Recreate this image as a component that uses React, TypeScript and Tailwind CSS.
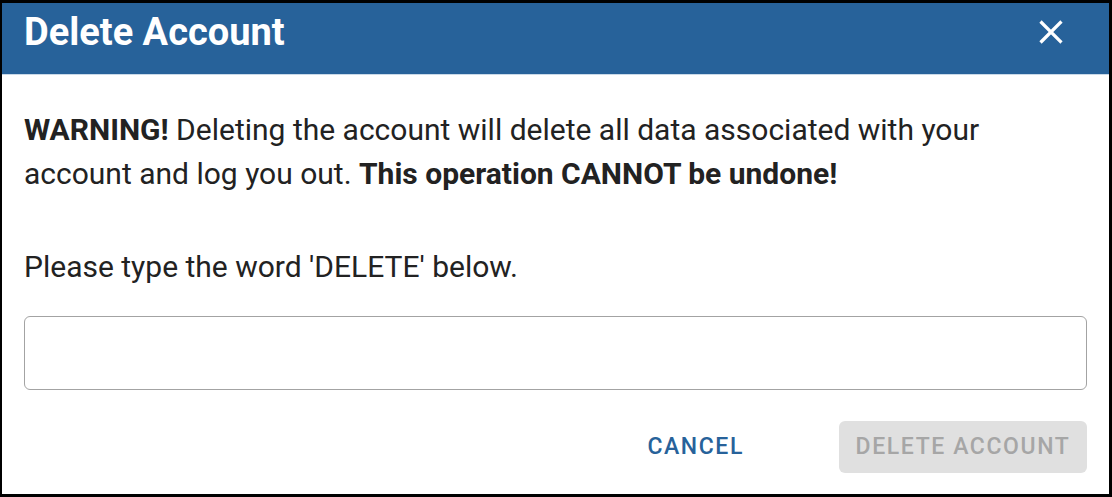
import React from "react";

export default function App() {
  return (
    <div
      className="w-[1112px] h-[497px] bg-white border-black border-l-2 border-t-[3px] border-r-[3px] border-b-[3px] flex flex-col"
      style={{ fontFamily: "Roboto, 'Liberation Sans', sans-serif" }}
    >
      <div className="h-[72px] bg-[#27629a] border-b border-[#c9d9e8] flex items-center justify-between pl-[22px] pr-[44px] pb-[13px]">
        <h2 className="text-[38px] font-bold text-white leading-none">Delete Account</h2>
        <svg width="28" height="28" viewBox="0 0 24 24" fill="none" stroke="white" strokeWidth="2.8" strokeLinecap="square">
          <path d="M4 4L20 20M20 4L4 20" />
        </svg>
      </div>
      <div className="flex-1 flex flex-col px-[22px]">
        <p className="mt-[33px] pr-[60px] text-[30px] leading-[44px] text-[#222222]">
          <b>WARNING!</b> Deleting the account will delete all data associated with your account and log you out.{" "}
          <b>This operation CANNOT be undone!</b>
        </p>
        <p className="mt-[49px] text-[30px] leading-[44px] text-[#222222]">Please type the word 'DELETE' below.</p>
        <input className="mt-[27px] h-[74px] w-full rounded-[6px] border border-[#a3a3a3] outline-none px-4 text-[24px]" />
        <div className="mt-[31px] flex justify-end items-center gap-[71px]">
          <button className="h-[52px] px-[24px] text-[23px] font-medium tracking-[1.6px] text-[#27629a]">CANCEL</button>
          <button className="h-[52px] w-[248px] rounded-[6px] bg-[#e0e0e0] text-[23px] font-medium tracking-[1.6px] text-[#a6a6a6]">
            DELETE ACCOUNT
          </button>
        </div>
      </div>
    </div>
  );
}
